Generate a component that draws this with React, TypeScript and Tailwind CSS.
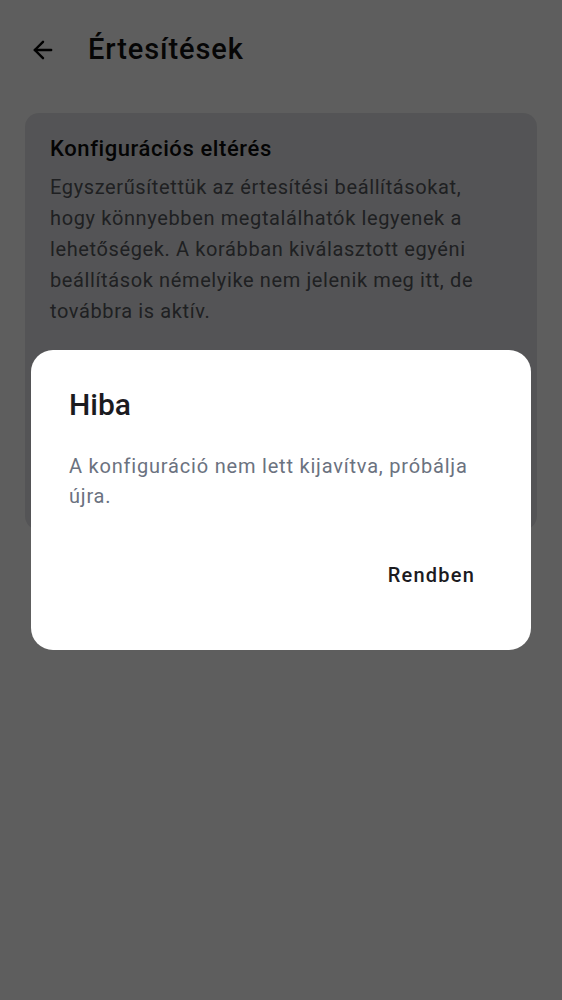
import { ArrowLeft } from "lucide-react";

export default function App() {
  return (
    <div className="relative h-[1000px] w-full overflow-hidden bg-white font-['Roboto',sans-serif]">
      <header className="flex h-[100px] items-center pl-[29px]">
        <ArrowLeft className="h-[28px] w-[28px] text-black" strokeWidth={2.1} />
        <h1 className="ml-[31px] text-[29px] font-medium tracking-[0.9px] text-[#111]">Értesítések</h1>
      </header>

      <section className="mx-[25px] mt-[13px] h-[417px] rounded-[14px] bg-[#e4e5e8] pt-[21px] pr-[36px] pl-[25px]">
        <h2 className="text-[22px] leading-[30px] font-medium tracking-[0.6px] text-[#0c0c0c]">
          Konfigurációs eltérés
        </h2>
        <p className="mt-[8px] text-[20px] leading-[31px] tracking-[0.62px] text-[#55585d]">
          Egyszerűsítettük az értesítési beállításokat, hogy könnyebben megtalálhatók legyenek a
          lehetőségek. A korábban kiválasztott egyéni beállítások némelyike nem jelenik meg itt, de
          továbbra is aktív.
        </p>
      </section>

      <div className="absolute inset-0 flex items-center justify-center bg-black/[0.63]">
        <div className="mx-[31px] w-full rounded-[22px] bg-white pt-[36px] pr-[44px] pb-[51px] pl-[38px]">
          <h3 className="text-[30px] leading-[38px] font-medium text-[#1b1b1f]">Hiba</h3>
          <p className="mt-[27px] text-[20px] leading-[30px] tracking-[0.8px] text-[#6b7280]">
            A konfiguráció nem lett kijavítva, próbálja újra.
          </p>
          <div className="mt-[40px] flex justify-end">
            <button type="button" className="h-[48px] px-3 text-[20px] font-medium tracking-[1.2px] text-[#1b1b1f]">
              Rendben
            </button>
          </div>
        </div>
      </div>
    </div>
  );
}
